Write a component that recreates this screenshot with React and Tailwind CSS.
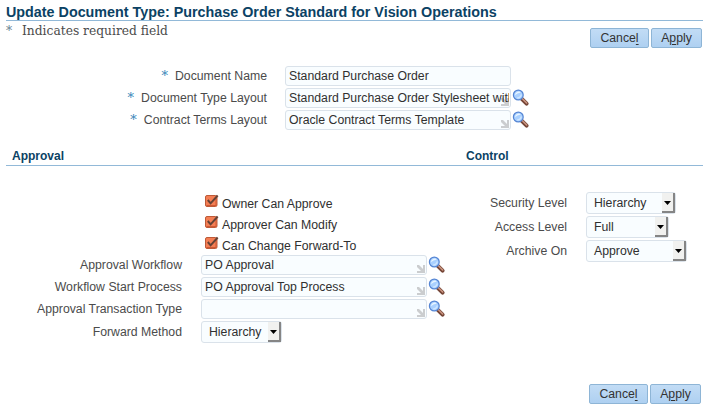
function Magnifier() {
  return (
    <svg width="18" height="18" viewBox="0 0 18 18" className="shrink-0">
      <path d="M9.8 9.8 L14.6 14.6" stroke="#754536" strokeWidth="4" strokeLinecap="round" />
      <path d="M10.4 9.7 L14.7 14" stroke="#cb9580" strokeWidth="1.6" strokeLinecap="round" />
      <circle cx="6.3" cy="6" r="4.9" fill="#a9d0ff" stroke="#5585d3" strokeWidth="1.2" />
      <path d="M3 6.2 A3.6 3.6 0 0 1 8.8 3.4 Q5 3.8 3 6.2Z" fill="#e8f5ff" />
      <path d="M5 9 Q8.5 9 9.4 5.5" stroke="#cfe6ff" strokeWidth="1.2" fill="none" />
    </svg>
  );
}

function Field({ value, lookup = true }) {
  return (
    <div className="flex h-5 items-center">
      <div className="relative h-5 w-[226px] shrink-0 overflow-hidden whitespace-nowrap rounded-[3px] border border-[#dae2ea] bg-[#f9fdff] pl-[3px] text-[#303030] leading-[18px]">
        {lookup && (
          <svg width="8" height="8" viewBox="0 0 8 8" className="absolute bottom-[1px] right-[1px]">
            <path d="M0 0h2l4 4V0h2v8H0V6h4L0 2Z" fill="#cbcdcf" />
          </svg>
        )}
        <span className="relative block w-[220px] overflow-hidden">{value}</span>
      </div>
      {lookup && <div className="-mt-px ml-[1px]"><Magnifier /></div>}
    </div>
  );
}

function Select({ value, width }) {
  return (
    <div className={`flex h-[22px] shrink-0 justify-between rounded-[3px] border border-[#dae2ea] bg-[#f9fdff] pl-[7px] leading-5 text-[#303030] ${width}`}>
      <span>{value}</span>
      <span className="flex h-5 w-[13px] items-center justify-center border-b-2 border-r-2 border-[#858585] bg-[#f1f1ef] pt-[2px]">
        <svg width="7" height="4" viewBox="0 0 7 4"><path d="M0 0h7L3.5 4Z" fill="#000" /></svg>
      </span>
    </div>
  );
}

function Row({ label, required, width, children }) {
  return (
    <div className="flex items-center">
      <div className={`flex shrink-0 justify-end whitespace-nowrap text-[#4b4b4b] ${width}`}>
        {required && <Star />}
        <span>{label}</span>
      </div>
      {children}
    </div>
  );
}

function Star() {
  return <span className="mr-[7px] font-['DejaVu_Serif',serif] text-[13px] leading-[18px] text-[#3685b8]">*</span>;
}

function Check({ label }) {
  return (
    <div className="flex h-[21px] items-center text-[#303030]">
      <svg width="15" height="14" viewBox="0 0 15 14" className="-mt-[5px] mr-[2px] shrink-0">
        <rect x="0.5" y="1.5" width="11.5" height="11" rx="1.5" fill="#f47e54" stroke="#bd5a38" />
        <path d="M1.5 11.5h9.5v-8" stroke="#cf5833" fill="none" />
        <path d="M2.8 6 L5.6 9.3 L12.7 1.5" stroke="#654235" strokeWidth="2" fill="none" />
      </svg>
      <span>{label}</span>
    </div>
  );
}

function Buttons() {
  const base = "h-5 rounded-[2px] border border-[#8eb5d6] bg-gradient-to-b from-[#c2dcf5] to-[#aed0f1] text-center leading-[18px] text-[#333333]";
  return (
    <div className="flex justify-end gap-[2px]">
      <button className={`${base} w-[59px]`}>Cance<u className="underline-offset-2">l</u></button>
      <button className={`${base} w-[51px]`}>A<u className="underline-offset-2">p</u>ply</button>
    </div>
  );
}

export default function App() {
  return (
    <main className="h-[412px] w-[710px] overflow-hidden bg-white pl-[6px] pr-[8px] pt-1 font-['Liberation_Sans',Arial,sans-serif] text-[12.28px] leading-[18px]">
      <h1 className="h-[17px] w-[697px] whitespace-nowrap border-b border-[#92b9d8] text-[14.34px] font-bold leading-4 text-[#0b4264]">Update Document Type: Purchase Order Standard for Vision Operations</h1>
      <header className="flex h-[27px] justify-between">
        <div className="flex whitespace-nowrap pt-px font-['DejaVu_Serif',serif] text-[12.28px] leading-[19px] text-[#4b4b4b]">
          <span className="w-4 text-[#647f91]">*</span><span>Indicates required field</span>
        </div>
        <div className="pt-[7px]"><Buttons /></div>
      </header>
      <section className="mt-[18px] flex flex-col gap-[2px]">
        <Row required label="Document Name" width="w-[261px] mr-[18px]"><Field value="Standard Purchase Order" lookup={false} /></Row>
        <Row required label="Document Type Layout" width="w-[261px] mr-[18px]"><Field value="Standard Purchase Order Stylesheet with" /></Row>
        <Row required label="Contract Terms Layout" width="w-[261px] mr-[18px]"><Field value="Oracle Contract Terms Template" /></Row>
      </section>
      <div className="mt-[16px] flex h-5 w-[697px] border-b border-[#92b9d8] pl-[6px] text-[12px] font-bold leading-[20px] text-[#0b4264]">
        <h2 className="w-[454px]">Approval</h2><h2>Control</h2>
      </div>
      <div className="flex">
        <section className="w-[452px] pt-[27px]">
          <div className="ml-[199px]">
            <Check label="Owner Can Approve" />
            <Check label="Approver Can Modify" />
            <Check label="Can Change Forward-To" />
          </div>
          <div className="-mt-px flex flex-col gap-[2px]">
            <Row label="Approval Workflow" width="w-[176px] mr-[19px]"><Field value="PO Approval" /></Row>
            <Row label="Workflow Start Process" width="w-[176px] mr-[19px]"><Field value="PO Approval Top Process" /></Row>
            <Row label="Approval Transaction Type" width="w-[176px] mr-[19px]"><Field value="" /></Row>
            <Row label="Forward Method" width="w-[176px] mr-[19px]"><Select value="Hierarchy" width="w-[81px]" /></Row>
          </div>
        </section>
        <section className="flex flex-col gap-[2px] pt-[26px]">
          <Row label="Security Level" width="w-[109px] mr-[19px]"><Select value="Hierarchy" width="w-[90px]" /></Row>
          <Row label="Access Level" width="w-[109px] mr-[19px]"><Select value="Full" width="w-[83px]" /></Row>
          <Row label="Archive On" width="w-[109px] mr-[19px]"><Select value="Approve" width="w-[101px]" /></Row>
        </section>
      </div>
      <footer className="mr-px mt-[41px]"><Buttons /></footer>
    </main>
  );
}
